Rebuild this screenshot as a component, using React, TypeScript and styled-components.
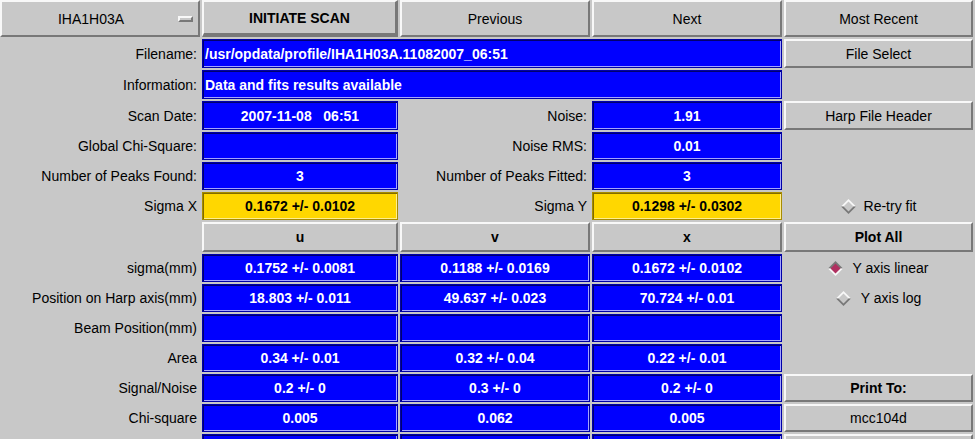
import styled, { createGlobalStyle } from "styled-components";

const FONT = `"Liberation Sans", Arial, Helvetica, sans-serif`;
const BG = "#c8c8c8";
const LIGHT = "#f8f8f8";
const DARK = "#787878";

const GlobalStyle = createGlobalStyle`
  html, body {
    margin: 0;
    padding: 0;
    background: ${BG};
  }
  body {
    font-family: ${FONT};
  }
`;

const Panel = styled.div`
  display: grid;
  grid-template-columns: 200px 196px 190px 190px 189px;
  grid-template-rows: 37px 29px 29px 29px 28px 28px 28px 30px;
  grid-auto-rows: 28px;
  gap: 2px;
  width: 975px;
  background: ${BG};
`;

const Empty = styled.div``;

const Button = styled.button<{ $bold?: boolean; $heavy?: boolean }>`
  display: flex;
  align-items: center;
  justify-content: center;
  margin: 0;
  padding: 0;
  background: ${BG};
  color: #000;
  font-family: ${FONT};
  font-size: 14px;
  font-weight: ${({ $bold }) => ($bold ? "bold" : "normal")};
  border-style: solid;
  border-width: ${({ $heavy }) => ($heavy ? "2px 3px 4px 2px" : "2px")};
  border-color: ${LIGHT} ${DARK} ${DARK} ${LIGHT};
  white-space: nowrap;
`;

const MenuButton = styled(Button)`
  justify-content: flex-start;
  padding-right: 5px;
`;

const MenuText = styled.span`
  flex: 1;
  text-align: center;
  padding-left: 2px;
`;

const MenuIndicator = styled.span`
  width: 11px;
  height: 2px;
  border-style: solid;
  border-width: 2px;
  border-color: ${LIGHT} ${DARK} ${DARK} ${LIGHT};
  background: ${BG};
`;

const Label = styled.div`
  display: flex;
  align-items: center;
  justify-content: flex-end;
  padding-right: 3px;
  font-size: 14px;
  color: #000;
  white-space: nowrap;
`;

const TONES = {
  blue: { bg: "#0000ff", edge: "#0000a8", shadow: "#00006e", light: "#a4a4ff", text: "#ffffff" },
  yellow: { bg: "#ffd700", edge: "#a88c00", shadow: "#806a00", light: "#ffee90", text: "#000000" },
};

const Field = styled.div<{ $tone?: keyof typeof TONES; $span?: number; $left?: boolean }>`
  grid-column: span ${({ $span }) => $span ?? 1};
  display: flex;
  align-items: center;
  justify-content: ${({ $left }) => ($left ? "flex-start" : "center")};
  padding-left: ${({ $left }) => ($left ? "2px" : "0")};
  background: ${({ $tone = "blue" }) => TONES[$tone].bg};
  color: ${({ $tone = "blue" }) => TONES[$tone].text};
  border: 1px solid ${({ $tone = "blue" }) => TONES[$tone].edge};
  box-shadow: inset 1px 1px 0 ${({ $tone = "blue" }) => TONES[$tone].shadow},
    inset -1px -1px 0 ${({ $tone = "blue" }) => TONES[$tone].light};
  font-size: 14px;
  font-weight: bold;
  white-space: pre;
  overflow: hidden;
`;

const RadioCell = styled.div<{ $gap: number }>`
  display: flex;
  align-items: center;
  justify-content: center;
  gap: ${({ $gap }) => $gap}px;
  font-size: 14px;
  color: #000;
`;

const Diamond = ({ checked }: { checked?: boolean }) => {
  const top = checked ? DARK : LIGHT;
  const bottom = checked ? LIGHT : DARK;
  const fill = checked ? "#b03060" : BG;
  return (
    <svg width="15" height="15" viewBox="0 0 15 15">
      <polygon points="0,7.5 7.5,0 15,7.5" fill={top} />
      <polygon points="0,7.5 7.5,15 15,7.5" fill={bottom} />
      <polygon points="7.5,2.5 12.5,7.5 7.5,12.5 2.5,7.5" fill={fill} />
    </svg>
  );
};

const Radio = ({ label, checked, gap }: { label: string; checked?: boolean; gap: number }) => (
  <RadioCell $gap={gap}>
    <Diamond checked={checked} />
    <span>{label}</span>
  </RadioCell>
);

const resultRows: { label: string; values: string[]; side: React.ReactNode }[] = [
  {
    label: "sigma(mm)",
    values: ["0.1752 +/- 0.0081", "0.1188 +/- 0.0169", "0.1672 +/- 0.0102"],
    side: <Radio label="Y axis linear" checked gap={9} />,
  },
  {
    label: "Position on Harp axis(mm)",
    values: ["18.803 +/- 0.011", "49.637 +/- 0.023", "70.724 +/- 0.01"],
    side: <Radio label="Y axis log" gap={10} />,
  },
  { label: "Beam Position(mm)", values: ["", "", ""], side: <Empty /> },
  {
    label: "Area",
    values: ["0.34 +/- 0.01", "0.32 +/- 0.04", "0.22 +/- 0.01"],
    side: <Empty />,
  },
  {
    label: "Signal/Noise",
    values: ["0.2 +/- 0", "0.3 +/- 0", "0.2 +/- 0"],
    side: <Button $bold>Print To:</Button>,
  },
  {
    label: "Chi-square",
    values: ["0.005", "0.062", "0.005"],
    side: <Button>mcc104d</Button>,
  },
  { label: "", values: ["", "", ""], side: <Button /> },
];

const RowFragment = ({ label, values, side }: { label: string; values: string[]; side: React.ReactNode }) => (
  <>
    <Label>{label}</Label>
    {values.map((v, j) => (
      <Field key={j}>{v}</Field>
    ))}
    {side}
  </>
);

export default function App() {
  return (
    <>
      <GlobalStyle />
      <Panel>
        <MenuButton>
          <MenuText>IHA1H03A</MenuText>
          <MenuIndicator />
        </MenuButton>
        <Button $bold $heavy>INITIATE SCAN</Button>
        <Button>Previous</Button>
        <Button>Next</Button>
        <Button>Most Recent</Button>

        <Label>Filename:</Label>
        <Field $span={3} $left>/usr/opdata/profile/IHA1H03A.11082007_06:51</Field>
        <Button>File Select</Button>

        <Label>Information:</Label>
        <Field $span={3} $left>Data and fits results available</Field>
        <Empty />

        <Label>Scan Date:</Label>
        <Field>2007-11-08   06:51</Field>
        <Label>Noise:</Label>
        <Field>1.91</Field>
        <Button>Harp File Header</Button>

        <Label>Global Chi-Square:</Label>
        <Field />
        <Label>Noise RMS:</Label>
        <Field>0.01</Field>
        <Empty />

        <Label>Number of Peaks Found:</Label>
        <Field>3</Field>
        <Label>Number of Peaks Fitted:</Label>
        <Field>3</Field>
        <Empty />

        <Label>Sigma X</Label>
        <Field $tone="yellow">0.1672 +/- 0.0102</Field>
        <Label>Sigma Y</Label>
        <Field $tone="yellow">0.1298 +/- 0.0302</Field>
        <Radio label="Re-try fit" gap={8} />

        <Empty />
        <Button $bold>u</Button>
        <Button $bold>v</Button>
        <Button $bold>x</Button>
        <Button $bold>Plot All</Button>

        {resultRows.map((row, i) => (
          <RowFragment key={i} {...row} />
        ))}
      </Panel>
    </>
  );
}
